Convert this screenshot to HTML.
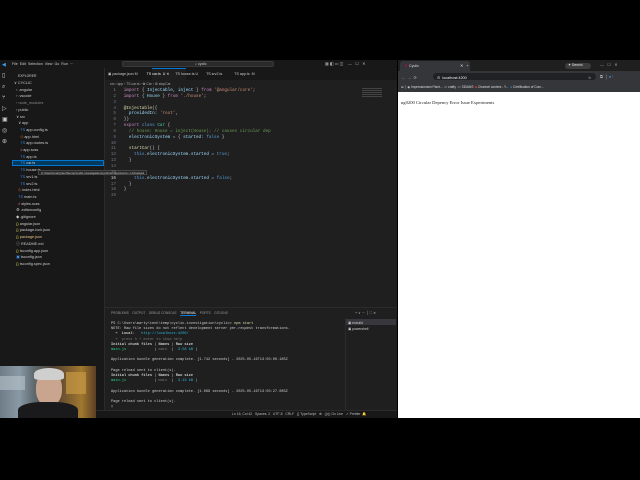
<!DOCTYPE html>
<html><head><meta charset="utf-8"><style>
*{margin:0;padding:0;box-sizing:border-box}
body{width:640px;height:480px;background:#000;position:relative;overflow:hidden;font-family:"Liberation Sans",sans-serif;font-size:4px;color:#ccc}
.a{position:absolute;white-space:nowrap}
.m{font-family:"Liberation Mono",monospace;font-size:4.3px}
.ln{color:#6e7681;text-align:right;width:12px}
.k{color:#569cd6}.s{color:#ce9178}.t{color:#4ec9b0}.v{color:#9cdcfe}.c{color:#6a9955}.f{color:#dcdcaa}.p{color:#c586c0}.g{color:#23d18b}
</style></head><body>
<!-- VS Code -->
<div class="a" style="left:0;top:60;width:397px;height:358px;top:60px;background:#1f1f1f"></div>
<div class="a" style="left:0;top:60px;width:397px;height:8px;background:#181818"></div>
<div class="a" style="left:2px;top:62px;color:#3c9ce6;font-size:5px">◀</div>
<div class="a" style="left:12px;top:62px;font-size:3.6px;color:#ccc">File &nbsp;Edit &nbsp;Selection &nbsp;View &nbsp;Go &nbsp;Run &nbsp;···</div>
<div class="a" style="left:122px;top:61px;width:152px;height:6px;background:#2a2a2a;border:1px solid #3a3a3a;border-radius:2px"></div>
<div class="a" style="left:195px;top:62px;font-size:3.6px">⌕ cyclic</div>
<div class="a" style="left:325px;top:61px;font-size:4px;color:#bbb">▦ ◧ ▭ ◫ &nbsp;&nbsp; — &nbsp; ☐ &nbsp; ✕</div>
<div class="a" style="left:0;top:68px;width:12px;height:350px;background:#181818"></div>
<div class="a" style="left:2px;top:71px;color:#ccc;font-size:6px;line-height:11px;width:8px">▯<br>⌕<br>⑂<br>▷<br>▣<br>◎<br>⊛</div>
<div class="a" style="left:12px;top:68px;width:93px;height:343px;background:#181818;border-right:1px solid #2b2b2b"></div>
<div class="a" style="left:18px;top:74px;font-size:3.4px">EXPLORER</div>
<div class="a" style="left:14px;top:80px;font-size:3.8px;line-height:6.7px;color:#ccc">
∨ CYCLIC<br>&nbsp;&nbsp;› .angular<br>&nbsp;&nbsp;› .vscode<br>&nbsp;&nbsp;<span style="color:#888">› node_modules</span><br>&nbsp;&nbsp;› public<br>&nbsp;&nbsp;∨ src<br>&nbsp;&nbsp;&nbsp;&nbsp;∨ app<br>
&nbsp;&nbsp;&nbsp;&nbsp;&nbsp;&nbsp;<span style="color:#3b8eea">TS</span> app.config.ts<br>&nbsp;&nbsp;&nbsp;&nbsp;&nbsp;&nbsp;<span style="color:#e37933">◇</span> app.html<br>&nbsp;&nbsp;&nbsp;&nbsp;&nbsp;&nbsp;<span style="color:#3b8eea">TS</span> app.routes.ts<br>&nbsp;&nbsp;&nbsp;&nbsp;&nbsp;&nbsp;<span style="color:#c6538c">♯</span> app.scss<br>&nbsp;&nbsp;&nbsp;&nbsp;&nbsp;&nbsp;<span style="color:#3b8eea">TS</span> app.ts<br>
</div>
<div class="a" style="left:12px;top:160px;width:92px;height:6px;background:#04395e;border:1px solid #0078d4"></div>
<div class="a" style="left:14px;top:80px;font-size:3.8px;line-height:6.7px;color:#ccc;margin-top:80.4px">
&nbsp;&nbsp;&nbsp;&nbsp;&nbsp;&nbsp;<span style="color:#3b8eea">TS</span> car.ts<br>&nbsp;&nbsp;&nbsp;&nbsp;&nbsp;&nbsp;<span style="color:#3b8eea">TS</span> house.ts<br>&nbsp;&nbsp;&nbsp;&nbsp;&nbsp;&nbsp;<span style="color:#3b8eea">TS</span> srv1.ts<br>&nbsp;&nbsp;&nbsp;&nbsp;&nbsp;&nbsp;<span style="color:#3b8eea">TS</span> srv2.ts<br>&nbsp;&nbsp;&nbsp;&nbsp;<span style="color:#e37933">◇</span> index.html<br>&nbsp;&nbsp;&nbsp;&nbsp;<span style="color:#3b8eea">TS</span> main.ts<br>&nbsp;&nbsp;&nbsp;&nbsp;<span style="color:#c6538c">♯</span> styles.scss<br>&nbsp;&nbsp;⚙ .editorconfig<br>&nbsp;&nbsp;◆ .gitignore<br>&nbsp;&nbsp;<span style="color:#cbcb41">{}</span> angular.json<br>&nbsp;&nbsp;<span style="color:#cbcb41">{}</span> package-lock.json<br>&nbsp;&nbsp;<span style="color:#cbcb41">{}</span> <span style="color:#e2c08d">package.json</span><br>&nbsp;&nbsp;ⓘ README.md<br>&nbsp;&nbsp;<span style="color:#cbcb41">{}</span> tsconfig.app.json<br>&nbsp;&nbsp;<span style="color:#3b8eea">▣</span> tsconfig.json<br>&nbsp;&nbsp;<span style="color:#cbcb41">{}</span> tsconfig.spec.json
</div>
<div class="a" style="left:38px;top:170px;height:5px;background:#252526;border:1px solid #454545;font-size:3px;padding:0 2px;color:#ccc">C:\Users\marty\tech\temp\cyclic-investigation\cyclic\src\app\car.ts • Untracked</div>
<!-- tabs -->
<div class="a" style="left:105px;top:68px;width:292px;height:12px;background:#181818"></div>
<div class="a" style="left:152px;top:68px;width:34px;height:12px;background:#1f1f1f;border-top:1px solid #0078d4"></div>
<div class="a" style="left:108px;top:72px;font-size:3.6px;color:#ccc">▣ package.json M &nbsp;&nbsp;&nbsp;&nbsp;&nbsp;&nbsp;&nbsp;&nbsp;<span style="color:#eee">TS car.ts &nbsp;U ✕</span> &nbsp;&nbsp;&nbsp;&nbsp;&nbsp;TS house.ts U &nbsp;&nbsp;&nbsp;&nbsp;&nbsp;&nbsp;&nbsp;TS srv2.ts &nbsp;&nbsp;&nbsp;&nbsp;&nbsp;&nbsp;&nbsp;&nbsp;&nbsp;&nbsp;&nbsp;TS app.ts &nbsp;M</div>
<div class="a" style="left:110px;top:82px;font-size:3.4px;color:#aaa">src › app › TS car.ts › ✿ Car › ⚙ stopCar</div>
<div class="a m" style="left:104px;top:88px;line-height:5.85px">
<div><span class="ln" style="display:inline-block">1</span>&nbsp;&nbsp;&nbsp;<span class="p">import</span> { <span class="v">Injectable</span>, <span class="v">inject</span> } <span class="p">from</span> <span class="s">'@angular/core'</span>;</div>
<div><span class="ln" style="display:inline-block">2</span>&nbsp;&nbsp;&nbsp;<span class="p">import</span> { <span class="v">House</span> } <span class="p">from</span> <span class="s">'./house'</span>;</div>
<div><span class="ln" style="display:inline-block">3</span></div>
<div><span class="ln" style="display:inline-block">4</span>&nbsp;&nbsp;&nbsp;<span class="f">@Injectable</span>({</div>
<div><span class="ln" style="display:inline-block">5</span>&nbsp;&nbsp;&nbsp;&nbsp;&nbsp;<span class="v">providedIn</span>: <span class="s">'root'</span>,</div>
<div><span class="ln" style="display:inline-block">6</span>&nbsp;&nbsp;&nbsp;})</div>
<div><span class="ln" style="display:inline-block">7</span>&nbsp;&nbsp;&nbsp;<span class="p">export</span> <span class="k">class</span> <span class="t">Car</span> {</div>
<div><span class="ln" style="display:inline-block">8</span>&nbsp;&nbsp;&nbsp;&nbsp;&nbsp;<span class="c">// house: House = inject(House); // causes circular dep</span></div>
<div><span class="ln" style="display:inline-block">9</span>&nbsp;&nbsp;&nbsp;&nbsp;&nbsp;<span class="v">electronicSystem</span> = { <span class="v">started</span>: <span class="k">false</span> }</div>
<div><span class="ln" style="display:inline-block">10</span></div>
<div><span class="ln" style="display:inline-block">11</span>&nbsp;&nbsp;&nbsp;&nbsp;&nbsp;<span class="f">startCar</span>() {</div>
<div><span class="ln" style="display:inline-block">12</span>&nbsp;&nbsp;&nbsp;&nbsp;&nbsp;&nbsp;&nbsp;<span class="k">this</span>.<span class="v">electronicSystem</span>.<span class="v">started</span> = <span class="k">true</span>;</div>
<div><span class="ln" style="display:inline-block">13</span>&nbsp;&nbsp;&nbsp;&nbsp;&nbsp;}</div>
<div><span class="ln" style="display:inline-block">14</span></div>
<div><span class="ln" style="display:inline-block">15</span></div>
<div><span class="ln" style="display:inline-block;color:#ccc">16</span>&nbsp;&nbsp;&nbsp;&nbsp;&nbsp;&nbsp;&nbsp;<span class="k">this</span>.<span class="v">electronicSystem</span>.<span class="v">started</span> = <span class="k">false</span>;</div>
<div><span class="ln" style="display:inline-block">17</span>&nbsp;&nbsp;&nbsp;&nbsp;&nbsp;}</div>
<div><span class="ln" style="display:inline-block">18</span>&nbsp;&nbsp;&nbsp;}</div>
<div><span class="ln" style="display:inline-block">19</span></div>
</div>
<div class="a" style="left:362px;top:88px;width:20px;height:10px;opacity:.3;background:repeating-linear-gradient(#999 0 1px,transparent 1px 2px)"></div>
<!-- panel -->
<div class="a" style="left:105px;top:307px;width:292px;height:1px;background:#2b2b2b"></div>
<div class="a" style="left:111px;top:311px;font-size:3.2px;color:#999">PROBLEMS &nbsp;&nbsp;&nbsp;OUTPUT &nbsp;&nbsp;&nbsp;DEBUG CONSOLE &nbsp;&nbsp;&nbsp;<span style="color:#eee;border-bottom:1px solid #0078d4">TERMINAL</span> &nbsp;&nbsp;&nbsp;PORTS &nbsp;&nbsp;&nbsp;GITLENS</div>
<div class="a" style="left:355px;top:311px;font-size:3.6px;color:#bbb">+ ∨ ··· │ ⛶ ✕</div>
<div class="a" style="left:345px;top:318px;width:52px;height:92px;border-left:1px solid #2b2b2b"></div>
<div class="a" style="left:346px;top:319px;width:50px;height:6px;background:#37373d"></div>
<div class="a" style="left:348px;top:320px;font-size:3.4px;line-height:6px">▣ esbuild<br>▣ powershell</div>
<div class="a m" style="left:111px;top:322px;font-size:3.6px;line-height:5.2px;color:#ccc">
PS C:\Users\marty\tech\temp\cyclic-investigation\cyclic> <span class="f">npm start</span><br>
NOTE: Raw file sizes do not reflect development server per-request transformations.<br>
&nbsp;&nbsp;➜ &nbsp;<b>Local</b>: &nbsp;&nbsp;<span style="color:#29b8db">http://localhost:4200/</span><br>
&nbsp;&nbsp;<span style="color:#777">➜ &nbsp;press h + enter to show help</span><br>
<b>Initial chunk files</b> | <b>Names</b> | <b>Raw size</b><br>
<span class="g">main.js</span> &nbsp;&nbsp;&nbsp;&nbsp;&nbsp;&nbsp;&nbsp;&nbsp;&nbsp;&nbsp;&nbsp;&nbsp;| <span style="color:#777">main</span> &nbsp;| &nbsp;<span style="color:#29b8db">3.58 kB</span> |<br><br>
Application bundle generation complete. [1.742 seconds] - 2025-05-16T13:50:00.185Z<br><br>
Page reload sent to client(s).<br>
<b>Initial chunk files</b> | <b>Names</b> | <b>Raw size</b><br>
<span class="g">main.js</span> &nbsp;&nbsp;&nbsp;&nbsp;&nbsp;&nbsp;&nbsp;&nbsp;&nbsp;&nbsp;&nbsp;&nbsp;| <span style="color:#777">main</span> &nbsp;| &nbsp;<span style="color:#29b8db">3.13 kB</span> |<br><br>
Application bundle generation complete. [1.069 seconds] - 2025-05-16T13:50:27.085Z<br><br>
Page reload sent to client(s).<br>▯
</div>
<div class="a" style="left:0;top:410px;width:397px;height:8px;background:#181818;border-top:1px solid #2b2b2b"></div>
<div class="a" style="left:232px;top:412px;font-size:3.4px;color:#bbb">Ln 16, Col 42 &nbsp;&nbsp;Spaces: 2 &nbsp;&nbsp;UTF-8 &nbsp;&nbsp;CRLF &nbsp;&nbsp;{} TypeScript &nbsp;&nbsp;⊕ &nbsp;&nbsp;((•)) Go Live &nbsp;&nbsp;✓ Prettier &nbsp;🔔</div>
<!-- webcam -->
<div class="a" style="left:0;top:366px;width:96px;height:52px;overflow:hidden;background:linear-gradient(90deg,#6f7c88 0,#8a99a6 20%,#5f6b70 35%,#4a3f33 55%,#7a5a30 70%,#a0782f 85%,#5a3e25 100%)">
<div class="a" style="left:0;top:10px;width:25px;height:14px;background:#b8c4cc;opacity:.6"></div>
<div class="a" style="left:36px;top:6px;width:26px;height:34px;border-radius:45%;background:#c9a48e"></div>
<div class="a" style="left:34px;top:2px;width:30px;height:12px;border-radius:50% 50% 20% 20%;background:#cfcfcf"></div>
<div class="a" style="left:18px;top:36px;width:60px;height:20px;border-radius:40% 40% 0 0;background:#1a1a1c"></div>
<div class="a" style="left:66px;top:6px;width:20px;height:22px;background:#c79a45;opacity:.7"></div>
</div>
<!-- browser -->
<div class="a" style="left:398px;top:60px;width:242px;height:358px;background:#fff"></div>
<div class="a" style="left:398px;top:60px;width:242px;height:11px;background:#1f1f1f"></div>
<div class="a" style="left:400px;top:61px;width:70px;height:10px;background:#35363a;border-radius:3px 3px 0 0"></div>
<div class="a" style="left:404px;top:63px;font-size:3.8px;color:#ddd"><span style="color:#dd0031">▼</span> Cyclic <span style="margin-left:40px">✕</span> &nbsp;&nbsp;+</div>
<div class="a" style="left:565px;top:63px;width:26px;height:6px;background:#3c3c3c;border-radius:3px;font-size:3.4px;color:#eee;padding-left:3px">✦ Gemini</div>
<div class="a" style="left:600px;top:62px;font-size:4px;color:#aaa">— &nbsp;&nbsp;☐ &nbsp;&nbsp;✕</div>
<div class="a" style="left:398px;top:71px;width:242px;height:21px;background:#35363a"></div>
<div class="a" style="left:401px;top:75px;font-size:4px;color:#bbb">← &nbsp;→ &nbsp;⟳</div>
<div class="a" style="left:433px;top:73px;width:163px;height:7px;background:#202124;border-radius:4px"></div>
<div class="a" style="left:437px;top:74.5px;font-size:3.8px;color:#eee">⊙ &nbsp;localhost:4200 <span style="margin-left:120px">☆</span></div>
<div class="a" style="left:600px;top:74px;font-size:4px;color:#bbb">⧉ &nbsp;│ <span style="color:#4a90d9">●</span> ⋮</div>
<div class="a" style="left:401px;top:85px;font-size:3.2px;color:#ddd">⊞ │ ◉ Impressionism Paint... &nbsp;▭ crafty &nbsp;▭ SIDANS &nbsp;<span style="color:#e33">■</span> Channel content - Y... &nbsp;<span style="color:#4a8be0">●</span> Certification of Com...</div>
<div class="a" style="left:401px;top:100px;font-family:'Liberation Serif',serif;font-size:4.6px;color:#222">ng0200 Circular Depency Error Issue Experiments</div>
</body></html>
